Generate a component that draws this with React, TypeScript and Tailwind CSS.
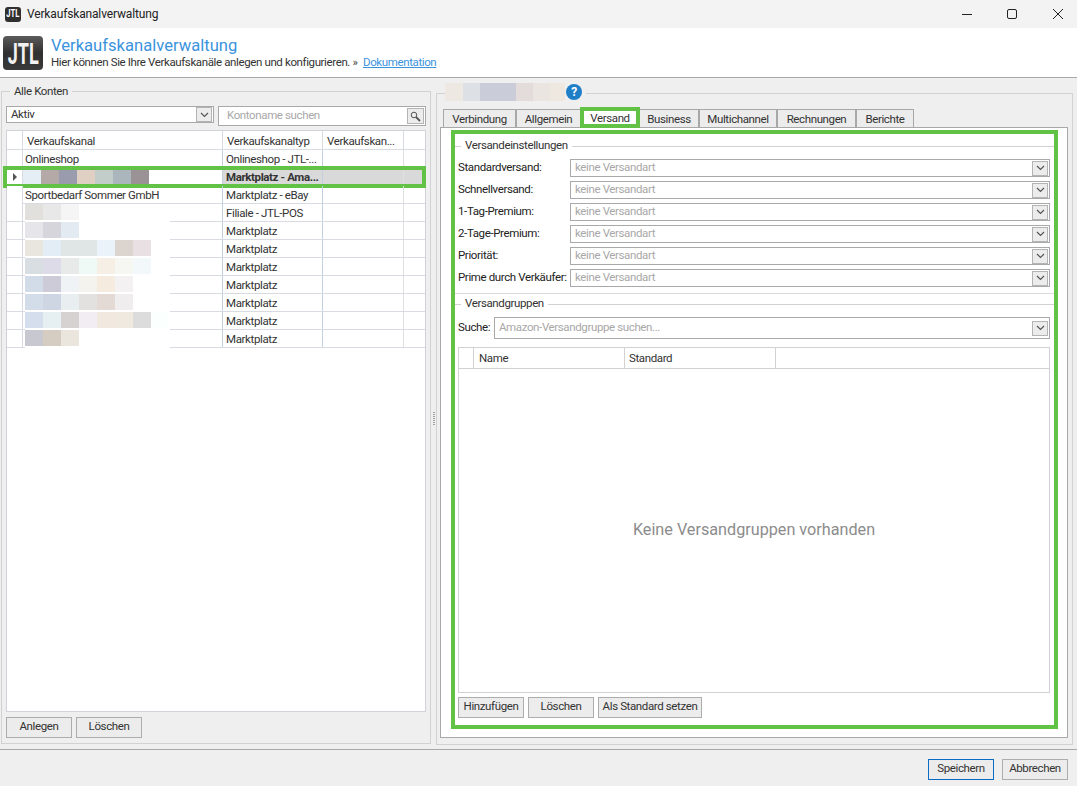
const channelRows = [
  { name: 'Onlineshop', type: 'Onlineshop - JTL-...' },
  { name: '', type: 'Marktplatz - Ama...', selected: true, blur: ['#e6eef5', '#b5a9a7', '#9a9cad', '#dfd0c3', '#c2cdc9', '#aab6bb', '#9a9295'] },
  { name: 'Sportbedarf Sommer GmbH', type: 'Marktplatz - eBay' },
  { name: '', type: 'Filiale - JTL-POS', blur: ['#e2e0dc', '#e8e8e8', '#f5f5f5'] },
  { name: '', type: 'Marktplatz', blur: ['#e6e5ea', '#d6d5dc', '#e4eaf1'] },
  { name: '', type: 'Marktplatz', blur: ['#e9e6e0', '#e2edf5', '#e0e6e6', '#e0e5e5', '#ebf3fa', '#dcd5cf', '#e8e0e2'] },
  { name: '', type: 'Marktplatz', blur: ['#d9dee3', '#dddbe8', '#e8eaea', '#eff9f6', '#f5efe6', '#f6f7f3', '#f3f8fb'] },
  { name: '', type: 'Marktplatz', blur: ['#d2dbe8', '#cdcbd7', '#f0f3f6', '#f5f3ee', '#f5ecdf', '#f3f1f2'] },
  { name: '', type: 'Marktplatz', blur: ['#d3dce9', '#ced6e3', '#e9eef0', '#e2e1df', '#e3dad5', '#efeded'] },
  { name: '', type: 'Marktplatz', blur: ['#d5deec', '#e6eff2', '#d6d2d2', '#f1edf2', '#f1e8df', '#f0e9e0', '#dcdcdc', '#fbfffe'] },
  { name: '', type: 'Marktplatz', blur: ['#c8c8d0', '#d5ccc2', '#ebe6dd'] },
];

const tabs = [
  { label: 'Verbindung', width: 'w-[73px]' },
  { label: 'Allgemein', width: 'w-[65px]' },
  { label: 'Versand', width: 'w-[60px]', active: true },
  { label: 'Business', width: 'w-[60px]' },
  { label: 'Multichannel', width: 'w-[78px]' },
  { label: 'Rechnungen', width: 'w-[79px]' },
  { label: 'Berichte', width: 'w-[58px]' },
];

const shippingLabels = [
  'Standardversand:',
  'Schnellversand:',
  '1-Tag-Premium:',
  '2-Tage-Premium:',
  'Priorität:',
  'Prime durch Verkäufer:',
];

const titleBlur = [
  { color: '#eee8e3', width: 18 },
  { color: '#dde0e4', width: 17 },
  { color: '#cacdd9', width: 36 },
  { color: '#e3dcda', width: 17 },
  { color: '#ebe5e1', width: 17 },
  { color: '#efe8e1', width: 15 },
];

function Logo({ small }: { small?: boolean }) {
  return (
    <div
      className={
        small
          ? 'flex h-[15px] w-[16px] items-center justify-center overflow-hidden rounded-[3px] bg-[#2f2f2f]'
          : 'flex h-[34px] w-[40px] items-center justify-center overflow-hidden rounded-[4px] bg-gradient-to-b from-[#5c5c5c] via-[#303030] to-[#3a3a3a]'
      }
    >
      <span
        className={
          small
            ? 'scale-x-[0.95] scale-y-[1.4] text-[8px] leading-none font-bold tracking-normal text-white'
            : 'scale-x-[0.9] scale-y-[1.5] text-[20px] leading-none font-bold tracking-normal text-[#f2f2f2]'
        }
      >
        JTL
      </span>
    </div>
  );
}

function Chevron() {
  return (
    <svg width="9" height="6" viewBox="0 0 9 6" fill="none">
      <path d="M1 1l3.5 3.5L8 1" stroke="#555" strokeWidth="1.2" />
    </svg>
  );
}

function SelectBox({ value, height, muted, className }: { value: string; height: string; muted?: boolean; className: string }) {
  return (
    <div className={`flex items-center border border-[#a9a9a9] bg-white pr-px ${height} ${className}`}>
      <span className={`flex-1 truncate pl-1 ${muted ? 'text-[#a8a8a8]' : 'text-[#333]'}`}>{value}</span>
      <div className="flex h-[15px] w-[16px] items-center justify-center border border-[#b4b4b4] bg-[#ececec]">
        <Chevron />
      </div>
    </div>
  );
}

function Btn({ label, width, primary }: { label: string; width: string; primary?: boolean }) {
  return (
    <button
      className={`h-[21px] ${width} border bg-[#ececec] pb-px text-center text-[#333] ${
        primary ? 'border-[#0a6cc0]' : 'border-[#adadad]'
      }`}
    >
      {label}
    </button>
  );
}

function Legend({ label }: { label: string }) {
  return (
    <div className="flex h-[14px] items-center">
      <div className="h-px w-[6px] bg-[#d2d2d2]" />
      <span className="px-[4px] text-[#333]">{label}</span>
      <div className="h-px flex-1 bg-[#d2d2d2]" />
    </div>
  );
}

function ChannelRow({ row }: { row: (typeof channelRows)[number] }) {
  return (
    <div className="relative grid h-[18px] grid-cols-[16px_200px_100px_81px_1fr] border-b border-[#d8dbe2] leading-[19px] text-[#333]">
      <div className="flex items-center justify-center border-r border-[#d8dbe2] bg-white pl-px">
        {row.selected && <div className="h-0 w-0 border-y-[4px] border-l-[4px] border-y-transparent border-l-[#555]" />}
      </div>
      <div className="relative border-r border-[#c3d0e0]">
        {row.blur ? (
          <div className={`relative -mb-px flex h-[18px] w-[145px] bg-white ${row.selected ? 'ml-0' : 'ml-[2px]'}`}>
            {row.blur.map((color, i) => (
              <div key={i} className="h-[16px] w-[18px]" style={{ backgroundColor: color }} />
            ))}
          </div>
        ) : (
          <span className="pl-[2px]">{row.name}</span>
        )}
      </div>
      <div className={`truncate border-r border-[#c3d0e0] pl-[3px] ${row.selected ? 'bg-[#d9d9d9] font-bold' : ''}`}>{row.type}</div>
      <div className={`border-r border-[#e0e0e0] ${row.selected ? 'bg-[#d9d9d9]' : ''}`} />
      <div className={row.selected ? 'bg-[#d9d9d9]' : ''} />
      {row.selected && <div className="absolute -top-[2px] -right-[1px] -bottom-[3px] -left-[4px] border-4 border-[#62c246]" />}
    </div>
  );
}

export default function App() {
  return (
    <div
      className="flex h-[786px] w-full flex-col overflow-hidden bg-[#efefef] text-[11.5px] tracking-[-0.38px] text-[#222]"
      style={{ fontFamily: 'Roboto, "Liberation Sans", sans-serif' }}
    >
      {/* Title bar */}
      <div className="flex h-[28px] items-center bg-[#f3f3f3] pl-[5px]">
        <Logo small />
        <span className="ml-[6px] flex-1 text-[12px] tracking-[-0.15px] text-[#222]">Verkaufskanalverwaltung</span>
        <svg width="110" height="12" viewBox="0 0 110 12" fill="none" stroke="#222" className="mr-[5px]">
          <path d="M0 6.5h10" />
          <rect x="45.5" y="1.5" width="9" height="9" rx="1.5" />
          <path d="M91 1l10 10M101 1L91 11" />
        </svg>
      </div>

      {/* Header */}
      <div className="flex h-[50px] items-center border-b border-[#a8a8a8] bg-white pl-[3px]">
        <Logo />
        <div className="ml-[8px]">
          <div className="text-[16.6px] leading-[18px] tracking-normal text-[#3b93dd]">Verkaufskanalverwaltung</div>
          <div className="leading-[14px] text-[#333]">
            Hier können Sie Ihre Verkaufskanäle anlegen und konfigurieren. <span className="text-[#444]">»</span>{' '}
            <a className="ml-[3px] text-[#3b93dd] underline">Dokumentation</a>
          </div>
        </div>
      </div>

      {/* Main */}
      <div className="flex h-[672px] border-b border-[#a8a8a8]">
        {/* Accounts */}
        <div className="relative mt-[13px] mb-[5px] ml-px flex w-[430px] flex-col border border-[#d2d2d2] pt-[14px] pl-[4px]">
          <span className="absolute -top-[9px] left-[8px] bg-[#efefef] px-[4px] text-[#333]">Alle Konten</span>
          <div className="flex h-[20px] items-start">
            <SelectBox value="Aktiv" height="h-[17px]" className="w-[208px]" />
            <div className="ml-[4px] flex h-[20px] w-[208px] items-center border border-[#a9a9a9] bg-white pr-px">
              <span className="flex-1 pb-px pl-[8px] text-[#a8a8a8]">Kontoname suchen</span>
              <div className="flex h-[16px] w-[17px] items-center justify-center border border-[#b4b4b4] bg-[#ececec]">
                <svg width="11" height="11" viewBox="0 0 11 11" fill="none" stroke="#555">
                  <circle cx="4" cy="4" r="2.8" />
                  <path d="M6 6l4 4" strokeWidth="1.8" />
                </svg>
              </div>
            </div>
          </div>
          <div className="mt-[4px] flex h-[582px] w-[420px] flex-col border border-[#d0d3d8] bg-white">
            <div className="grid h-[19px] shrink-0 grid-cols-[16px_200px_100px_81px_1fr] border-b border-[#d8dbe2] leading-[20px] text-[#333]">
              <div className="border-r border-[#d8dbe2]" />
              <div className="border-r border-[#d8dbe2] pl-[4px]">Verkaufskanal</div>
              <div className="border-r border-[#d8dbe2] pl-[4px]">Verkaufskanaltyp</div>
              <div className="truncate border-r border-[#d8dbe2] pl-[4px]">Verkaufskan...</div>
              <div />
            </div>
            {channelRows.map((row, i) => (
              <ChannelRow key={i} row={row} />
            ))}
          </div>
          <div className="mt-[5px] flex gap-[4px]">
            <Btn label="Anlegen" width="w-[66px]" />
            <Btn label="Löschen" width="w-[66px]" />
          </div>
        </div>

        {/* Splitter */}
        <div className="flex w-[5px] flex-col items-center justify-center gap-px pt-[10px]">
          {[0, 1, 2, 3, 4, 5, 6].map((i) => (
            <div key={i} className="h-px w-[2px] bg-[#a0a0a0]" />
          ))}
        </div>

        {/* Account details */}
        <div className="relative mt-[15px] mb-[4px] flex w-[637px] flex-col border border-[#d2d2d2] pt-[15px] pl-[3px]">
          <div className="absolute -top-[11px] left-[8px] flex items-center bg-[#efefef]">
            {titleBlur.map((part, i) => (
              <div key={i} className="h-[18px]" style={{ width: part.width, backgroundColor: part.color }} />
            ))}
            <div className="ml-px flex h-[16px] w-[16px] items-center justify-center rounded-full bg-[#1f7ec8] text-[12px] font-bold text-white">
              ?
            </div>
            <div className="w-[4px]" />
          </div>

          {/* Tabs */}
          <div className="flex h-[18px] pl-[3px]">
            {tabs.map((tab) =>
              tab.active ? (
                <div key={tab.label} className={`relative -mt-[2px] -mr-px -ml-px h-[21px] ${tab.width} border-4 border-[#62c246] bg-white text-center leading-[15px] text-[#333]`}>
                  {tab.label}
                </div>
              ) : (
                <div key={tab.label} className={`h-[18px] ${tab.width} border-t border-r border-l border-[#a8a8a8] bg-[#ececec] text-center leading-[19px] text-[#333]`}>
                  {tab.label}
                </div>
              ),
            )}
          </div>

          {/* Tab panel */}
          <div className="flex h-[611px] w-[628px] flex-col border border-[#a8a8a8] bg-white pt-[2px] pl-[10px]">
            <div className="flex h-[599px] w-[607px] flex-col border-4 border-[#62c246] px-[3px] pt-[5px] pr-[4px] pb-[7px]">
              <div className="-mr-[4px] -ml-[3px]">
                <Legend label="Versandeinstellungen" />
              </div>
              <div className="mt-[6px] flex flex-col gap-[4px]">
                {shippingLabels.map((label) => (
                  <div key={label} className="flex h-[18px] items-center">
                    <span className="w-[112px] whitespace-nowrap text-[#222]">{label}</span>
                    <SelectBox value="keine Versandart" muted height="h-[18px]" className="flex-1" />
                  </div>
                ))}
              </div>
              <div className="-mr-[4px] -ml-[3px] mt-[6px] h-px bg-[#dcdcdc]" />
              <div className="-mr-[4px] -ml-[3px] mt-[3px]">
                <Legend label="Versandgruppen" />
              </div>
              <div className="mt-[6px] flex h-[22px] items-center">
                <span className="w-[36px] text-[#222]">Suche:</span>
                <SelectBox value="Amazon-Versandgruppe suchen..." muted height="h-[22px]" className="flex-1" />
              </div>
              <div className="mt-[8px] flex flex-1 flex-col border border-[#d2d2d2]">
                <div className="grid h-[21px] grid-cols-[15px_151px_151px_1fr] border-b border-[#d2d2d2] leading-[20px] text-[#333]">
                  <div className="border-r border-[#d2d2d2]" />
                  <div className="border-r border-[#d2d2d2] pl-[5px]">Name</div>
                  <div className="border-r border-[#d2d2d2] pl-[4px]">Standard</div>
                  <div />
                </div>
                <div className="flex flex-1 items-center justify-center text-[16.2px] tracking-normal text-[#8c8c8c]">
                  Keine Versandgruppen vorhanden
                </div>
              </div>
              <div className="mt-[4px] flex gap-[4px]">
                <Btn label="Hinzufügen" width="w-[66px]" />
                <Btn label="Löschen" width="w-[66px]" />
                <Btn label="Als Standard setzen" width="w-[104px]" />
              </div>
            </div>
          </div>
        </div>
      </div>

      {/* Footer */}
      <div className="flex flex-1 items-start justify-end gap-[8px] pt-[9px] pr-[9px]">
        <Btn label="Speichern" width="w-[66px]" primary />
        <Btn label="Abbrechen" width="w-[66px]" />
      </div>
    </div>
  );
}
